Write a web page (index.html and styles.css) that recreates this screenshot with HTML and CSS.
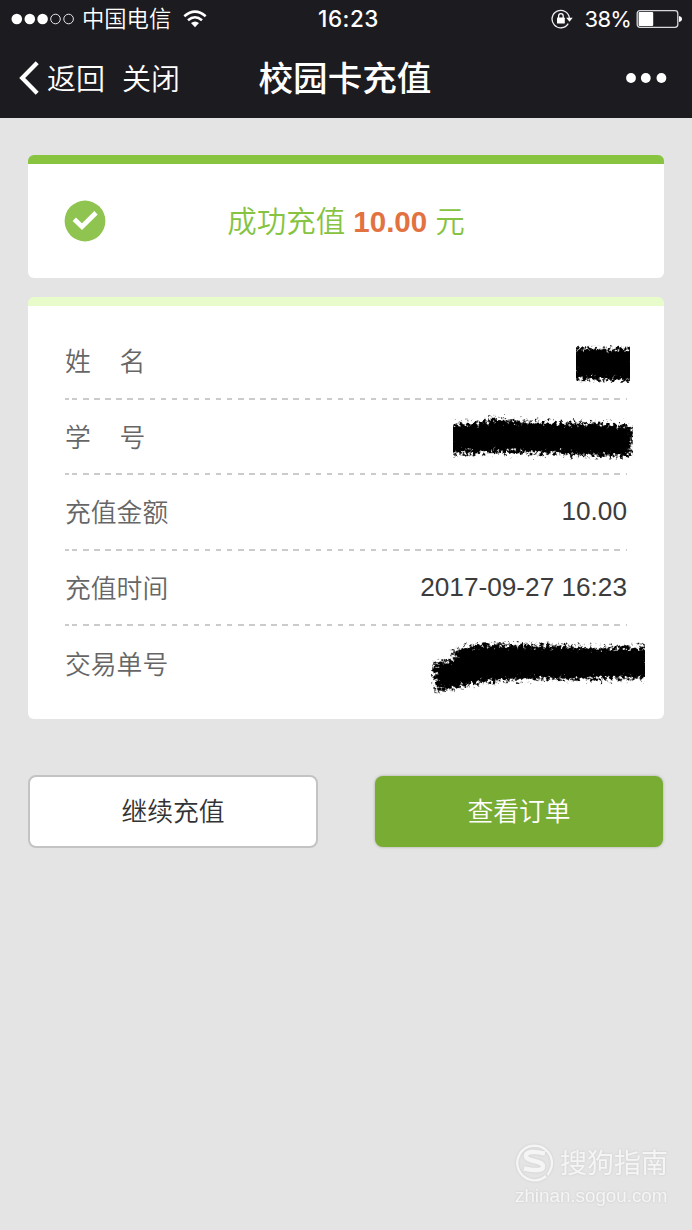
FILE: index.html
```html
<!DOCTYPE html>
<html lang="zh-CN">
<head>
<meta charset="utf-8">
<title>校园卡充值</title>
<link rel="stylesheet" href="styles.css">
</head>
<body>
<header class="header">
  <div class="status">
    <div class="status-left">
      <svg class="signal" width="64" height="12" viewBox="0 0 64 12">
        <g fill="#fff"><circle cx="5.8" cy="6" r="5.3"/><circle cx="18.8" cy="6" r="5.3"/><circle cx="31.6" cy="6" r="5.3"/></g>
        <g fill="none" stroke="#e8e8ea" stroke-width="1"><circle cx="44.5" cy="6" r="4.8"/><circle cx="57.6" cy="6" r="4.8"/></g>
      </svg>
      <span class="carrier">中国电信</span>
      <svg class="wifi" width="24" height="18" viewBox="0 0 24 18">
        <g fill="none" stroke="#fff" stroke-width="2.5"><path d="M1.3 6.2Q12 -3 22.7 6.2"/><path d="M5 10.3Q12 4.2 19 10.3"/></g>
        <path d="M8 13Q12 9.8 16 13L12 17.2Z" fill="#fff"/>
      </svg>
    </div>
    <div class="clock">16:23</div>
    <div class="status-right">
      <svg width="22" height="20" viewBox="0 0 22 20">
        <path d="M17.2 14.6A8.7 8.7 0 1 1 18.4 9" fill="none" stroke="#eee" stroke-width="1.3"/>
        <path d="M15.2 8.7h6.5l-3.2 4z" fill="#fff"/>
        <rect x="6" y="8.6" width="7.8" height="6" rx=".6" fill="#fff"/>
        <path d="M7.6 9V7a2.3 2.3 0 0 1 4.6 0v2" fill="none" stroke="#fff" stroke-width="1.3"/>
      </svg>
      <span class="percent">38%</span>
      <svg width="47" height="20" viewBox="0 0 47 20">
        <rect x="1.2" y="1.7" width="40.6" height="16.6" rx="2.8" fill="none" stroke="#d8d8da" stroke-width="1.3"/>
        <rect x="2.6" y="3" width="14.6" height="14" rx="1" fill="#fff"/>
        <path d="M43 7q3 .6 3 3t-3 3z" fill="#fff"/>
      </svg>
    </div>
  </div>
  <nav class="nav">
    <div class="nav-left">
      <svg width="20" height="34" viewBox="0 0 20 34"><path d="M18.2 1.8L3.2 17l15 15.2" fill="none" stroke="#fff" stroke-width="4.2"/></svg>
      <span>返回</span><span class="close">关闭</span>
    </div>
    <h1 class="title">校园卡充值</h1>
    <svg class="more" width="42" height="12" viewBox="0 0 42 12" fill="#fff"><circle cx="6" cy="6" r="4.9"/><circle cx="20.8" cy="6" r="4.9"/><circle cx="36.4" cy="6" r="4.9"/></svg>
  </nav>
</header>

<main class="content">
  <section class="card result">
    <svg width="42" height="42" viewBox="0 0 42 42"><circle cx="21" cy="21" r="20.4" fill="#8fc450"/><path d="M10.3 19.3L18 26.7 32 12.8" fill="none" stroke="#fff" stroke-width="4.8"/></svg>
    <p class="message">成功充值 <strong class="amount">10.00</strong> 元</p>
  </section>

  <section class="card details">
    <div class="row"><span class="label">姓&nbsp;&nbsp;&nbsp;&nbsp;名</span>
      <svg class="redacted name" width="54" height="38" viewBox="576 345 54 38"><g class="ink"><path d="M572 349L590 348 610 349 634 348V381L610 380 572 379Z"/></g></svg></div>
    <div class="row"><span class="label">学&nbsp;&nbsp;&nbsp;&nbsp;号</span>
      <svg class="redacted number" width="180" height="46" viewBox="453 413 180 46"><g class="ink"><path d="M449 424L486 421 490 417 515 420 560 422 600 422 633 426 631 455 600 455 560 453 500 451 449 453Z"/></g></svg></div>
    <div class="row"><span class="label">充值金额</span><span class="value">10.00</span></div>
    <div class="row"><span class="label">充值时间</span><span class="value">2017-09-27 16:23</span></div>
    <div class="row"><span class="label">交易单号</span>
      <svg class="redacted order" width="214" height="54" viewBox="431 642 214 54"><g class="ink"><path d="M432 665L455 660 453 652 478 645 545 646 600 649 649 648V679L600 680 530 680 480 683 460 688 437 693Z"/></g></svg></div>
  </section>

  <div class="actions">
    <button class="btn again">继续充值</button>
    <button class="btn orders">查看订单</button>
  </div>
</main>

<footer class="watermark">
  <div class="brand">
    <svg width="40" height="40" viewBox="0 0 40 40" fill="none" stroke="#f5f5f5"><path d="M31 34A17.3 17.3 0 1 1 36.4 25Q35 30 32.5 33" stroke-width="2.4"/><path d="M30 11.5Q11 7.5 11 14C11 20 28 18 28 24.5Q28 30.5 9 26.5" stroke-width="4.6"/></svg>
    <span>搜狗指南</span>
  </div>
  <div class="site">zhinan.sogou.com</div>
</footer>

<svg class="defs" width="0" height="0">
  <filter id="rough" x="-5%" y="-20%" width="110%" height="140%">
    <feTurbulence type="fractalNoise" baseFrequency=".3" numOctaves="3" seed="7" result="noise"/>
    <feGaussianBlur in="SourceGraphic" stdDeviation="1.1" result="soft"/>
    <feDisplacementMap in="soft" in2="noise" scale="15" xChannelSelector="R" yChannelSelector="G"/>
    <feGaussianBlur stdDeviation=".45"/>
  </filter>
</svg>
</body>
</html>
```
FILE: styles.css
```css
* { box-sizing: border-box; }
body {
  margin: 0;
  min-height: 1230px;
  display: flex;
  flex-direction: column;
  background: #e4e4e4;
  font-family: "Liberation Sans", "Noto Sans CJK SC", sans-serif;
}
svg { display: block; flex: none; }
.defs { position: absolute; }

.header { height: 118px; background: #1c1b20; color: #fff; }
.status {
  height: 38px;
  display: grid;
  grid-template-columns: 1fr auto 1fr;
  align-items: center;
  padding: 0 9px 0 11px;
}
.status-left, .status-right { display: flex; align-items: center; }
.status-right { justify-content: flex-end; }
.carrier { margin: 2px 12px 0 7px; font-size: 22.3px; font-weight: 350; line-height: 30px; }
.clock { margin-left: 3px; font: 500 22.5px/30px Inter, sans-serif; letter-spacing: .5px; }
.percent { margin: 0 5px 0 12px; font: 400 22px/30px Inter, sans-serif; letter-spacing: -.8px; }

.nav {
  height: 80px;
  display: grid;
  grid-template-columns: 1fr auto 1fr;
  align-items: center;
  padding: 0 25px 0 19px;
}
.nav-left { display: flex; align-items: center; font-size: 29px; font-weight: 350; line-height: 40px; }
.nav-left span { margin: 3px 0 0 8px; }
.nav-left .close { margin-left: 17px; }
.title { margin: 1px 0 0 4px; font-size: 34.6px; font-weight: 500; line-height: 44px; }
.more { justify-self: end; }

.content { padding: 37px 28px 0; }
.card { background: #fff; border-radius: 6px; overflow: hidden; }
.result {
  height: 123px;
  display: grid;
  grid-template-columns: 1fr auto 1fr;
  align-items: center;
  padding: 0 36px;
  border-top: 9px solid #88c440;
}
.message { margin: 2px 0 0; color: #85c340; font-size: 29.5px; font-weight: 350; line-height: 40px; }
.amount { color: #e2723f; font-weight: 700; }

.details { margin-top: 19px; height: 422px; padding: 18px 37px 0; border-top: 9px solid #e8fccb; }
.row {
  height: 75.6px;
  display: flex;
  align-items: center;
  justify-content: space-between;
  color: #666;
  background:
    linear-gradient(#cbcbcb, #cbcbcb) 0 100% / 4px 2px no-repeat,
    repeating-linear-gradient(90deg, #cbcbcb 0 5.4px, transparent 5.4px 11.07px) -4px 100% / 110% 2px no-repeat;
}
.row:last-child { background: none; }
.label { margin-top: 1px; font-size: 25.8px; font-weight: 350; line-height: 36px; }
.value { color: #3c3c3c; font-size: 26.2px; line-height: 36px; margin-top: -3px; }
.ink { fill: #000; filter: url(#rough); }
.name { margin: 4px -3px 0 0; }
.number { margin-right: -6px; }
.order { margin: 8px -18px 0 0; }

.actions { display: grid; grid-template-columns: 290px 288px; justify-content: space-between; align-items: center; padding-right: 1px; margin-top: 56px; }
.btn { padding: 1px 0 0; border-radius: 8px; font: 350 25.8px/36px "Liberation Sans", "Noto Sans CJK SC", sans-serif; }
.again { height: 73px; color: #333; background: #fff; border: 2px solid #c3c3c3; }
.orders { height: 71px; color: #fff; background: #79ac33; border: 0; box-shadow: 0 0 3px #a5aa9e; }

.watermark { margin: auto 24px 22px auto; width: 153px; color: #f5f5f5; filter: drop-shadow(0 0 1px #cacaca); }
.brand { display: flex; align-items: center; justify-content: space-between; font-size: 27px; line-height: 40px; }
.brand span { margin-top: 5px; }
.site { font: 400 18.8px/24px "Liberation Sans", sans-serif; }
```
